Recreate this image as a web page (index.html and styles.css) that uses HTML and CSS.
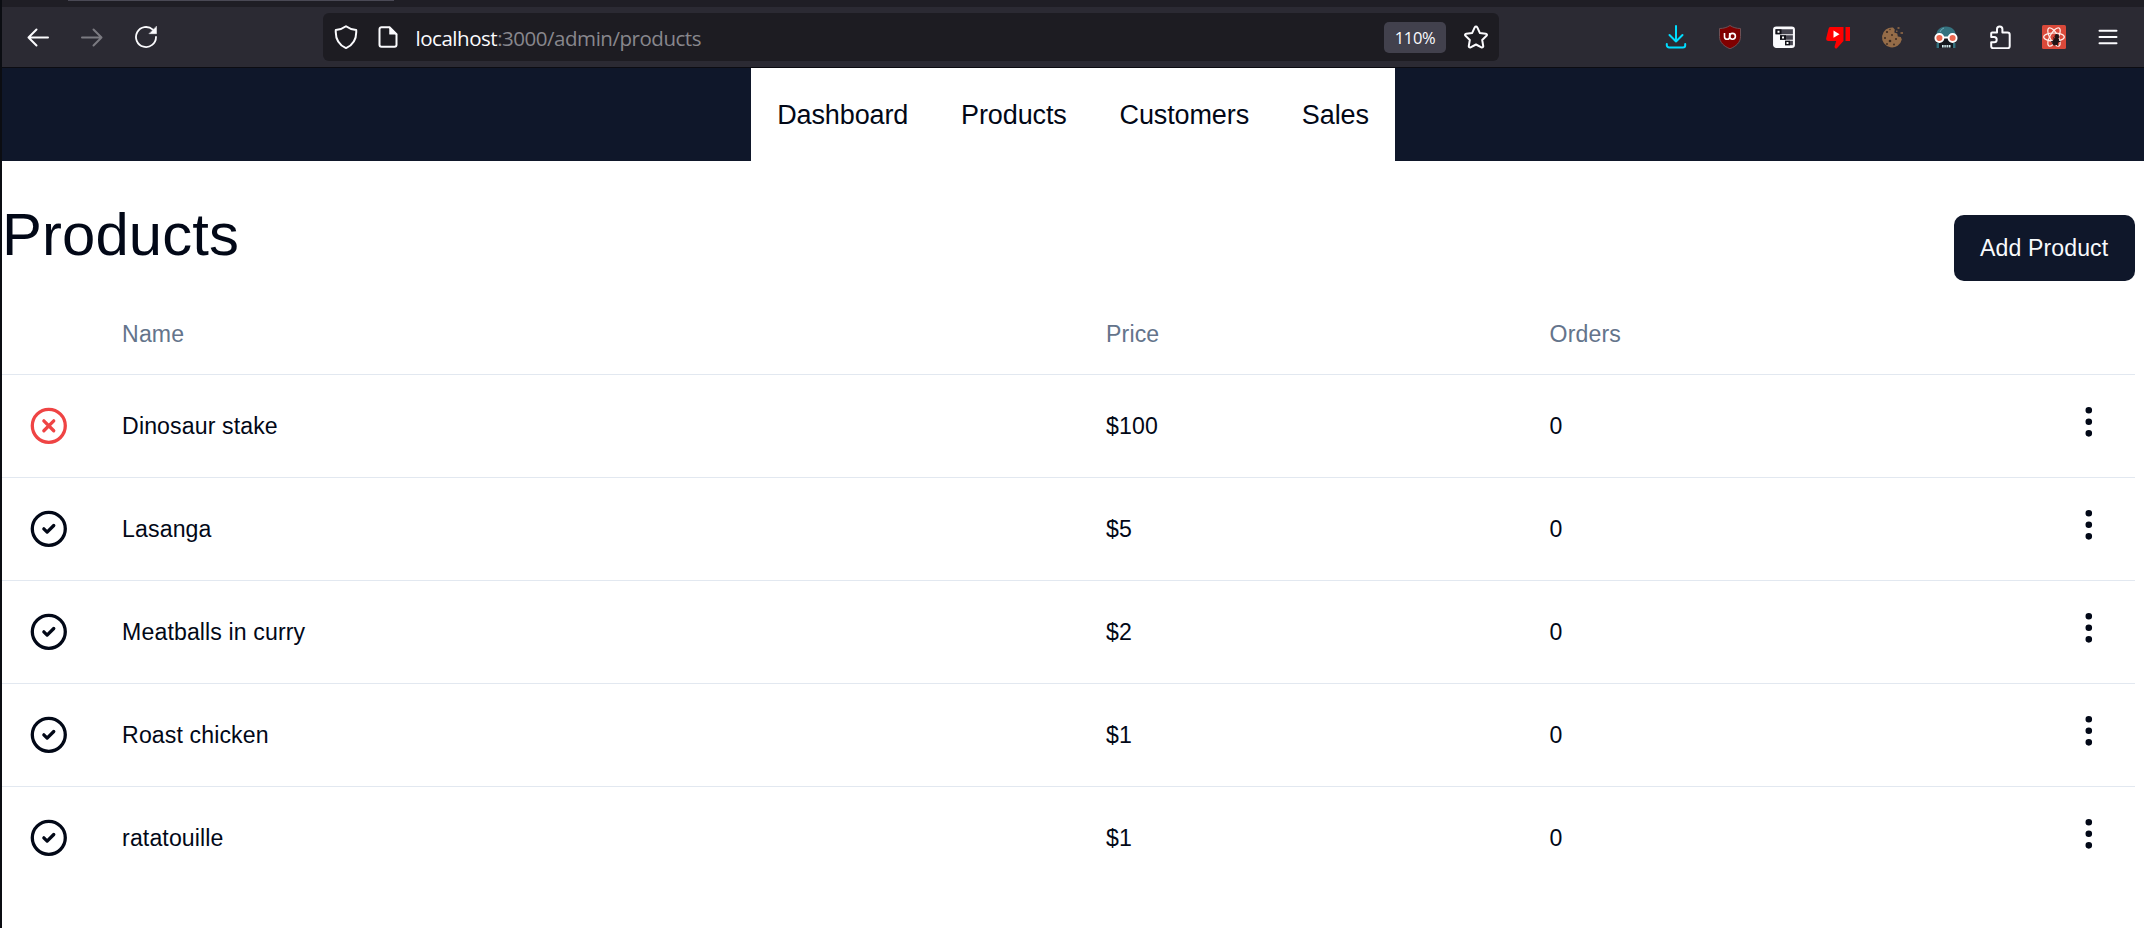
FILE: index.html
```html
<!DOCTYPE html>
<html lang="en">
<head>
<meta charset="utf-8">
<title>Products</title>
<link rel="stylesheet" href="styles.css">
</head>
<body>
<svg class="defs" width="0" height="0" aria-hidden="true">
  <symbol id="check" viewBox="0 0 24 24"><circle cx="12" cy="12" r="10"/><path d="m9 12 2 2 4-4"/></symbol>
  <symbol id="cross" viewBox="0 0 24 24"><circle cx="12" cy="12" r="10"/><path d="m15 9-6 6M9 9l6 6"/></symbol>
  <symbol id="more" viewBox="0 0 24 24"><circle cx="12" cy="5" r="1"/><circle cx="12" cy="12" r="1"/><circle cx="12" cy="19" r="1"/></symbol>
</svg>
<div class="window">
  <div class="tabstrip"><div class="tab-edge"></div></div>
  <div class="toolbar">
    <div class="nav-buttons">
      <svg class="ico" viewBox="0 0 24 24"><path d="M22 12.500H2.500M10.500 4.500l-8 8 8 8"/></svg>
      <svg class="ico dim" viewBox="0 0 24 24"><path d="M2 12.500h19.500M13.500 4.500l8 8-8 8"/></svg>
      <svg class="ico thin" viewBox="0 0 24 24"><path d="M22 12a10 10 0 1 1-3.200-7.300"/><path class="solid" d="M22.500 1.500v7.200h-7.200z"/></svg>
    </div>
    <div class="urlbar">
      <svg class="ico shield" viewBox="0 0 24 24"><path d="M12 1.300c3 2.300 6.400 3.400 10.200 3.800.5 7.500-2.200 14.400-10.200 18C4 19.500 1.300 12.600 1.800 5.100 5.600 4.700 9 3.600 12 1.300z"/></svg>
      <svg class="ico page-ico" viewBox="0 0 24 24"><path d="M5.500 2.200h8l7 7v10.600a2 2 0 0 1-2 2h-13a2 2 0 0 1-2-2V4.200a2 2 0 0 1 2-2z"/><path class="solid" d="M13.500 2.200v7h7z"/></svg>
      <div class="url"><span class="host">localhost</span>:3000/admin/products</div>
      <div class="zoom">110%</div>
      <svg class="ico star" viewBox="0 0 24 24"><path d="M12 1.500c.6 0 1 .4 1.300.9l2.500 5.500 6 .8c1.200.2 1.500 1.300.7 2.100l-4.300 4.200 1 6c.2 1.100-.8 1.800-1.800 1.300L12 19.500l-5.400 2.800c-1 .5-2-.2-1.800-1.300l1-6-4.300-4.200c-.8-.8-.5-1.900.7-2.100l6-.8 2.500-5.500c.3-.5.700-.9 1.300-.9z"/></svg>
    </div>
    <div class="extensions">
      <svg class="ico download" viewBox="0 0 24 24"><path d="M12 1v15.500M5.500 10l6.500 6.500 6.500-6.500M2.800 19v1.200a2.300 2.300 0 0 0 2.300 2.300h13.800a2.300 2.300 0 0 0 2.300-2.300V19"/></svg>
      <svg class="art" viewBox="0 0 24 24"><path d="M12 .5c3 2 6.500 3 10.500 3v8c0 6-4.500 9.800-10.500 12.300C6 21.300 1.500 17.500 1.500 11.500v-8c4 0 7.500-1 10.500-3z" fill="#800000" stroke="#6d5055"/><path d="M6.500 8v3.700a2.600 2.600 0 0 0 5.200 0V8" fill="none" stroke="#fff" stroke-width="1.600"/><circle cx="14.500" cy="11.300" r="2.900" fill="none" stroke="#fff" stroke-width="1.600"/></svg>
      <svg class="art" viewBox="0 0 24 24"><rect x="1.800" y="2.300" width="20.400" height="20" rx="2.500" fill="#fbfbfe" stroke="#fbfbfe" stroke-width="1.500"/><path d="M3.500 4.300h17.400v5H3.500zM8 10.200h12.900v4.600H8zM13 15.800h7.900v4.400H13z" fill="#45444f"/><path d="M3.500 4.300h6v5h-6zM8 10.200h6v4.600H8zM13 15.800h5v4.400h-5z" fill="#111118"/><path d="M5.500 5.800h2v2h-2zM10 11.500h2v2h-2zM14.500 17h2v2h-2z" fill="#fff"/></svg>
      <svg class="art" viewBox="0 0 24 24"><path d="M4.200 2h13.300v14l-6.800 7.500c-1.500.2-2.500-1-2-2.500l1.500-5H2.500C.8 16 0 15 .2 13.300L2.500 4c.3-1.300.8-2 1.700-2zM19.500 2h4.700v14h-4.700z" fill="#f00"/><path d="M7.500 5.500v7.200l6-3.500z" fill="#fff"/></svg>
      <svg class="art" viewBox="0 0 24 24"><path d="M13 2.500a10 10 0 1 0 8.800 12l-1-2.500-3-.5-.5-3-3-1 .5-3z" fill="#956c48"/><path d="M17.500 2h2v2h-2zM20.500 7H23v2h-2.500zM16 5.500h1.500V7H16z" fill="#7d5c42"/><g fill="#3b2a20"><circle cx="7" cy="7" r="1.100"/><circle cx="12" cy="10" r=".9"/><circle cx="5" cy="13" r="1"/><circle cx="10" cy="16" r="1.300"/><circle cx="16" cy="14" r="1"/><circle cx="14" cy="19.500" r=".9"/><circle cx="7" cy="19" r=".9"/><circle cx="10" cy="4.500" r=".7"/></g></svg>
      <svg class="art" viewBox="0 0 24 24"><path d="M2 12C2 5 6 1.500 12 1.500S22 5 22 12z" fill="#35727f"/><path d="M6 7q1-3 4-4" fill="none" stroke="#6eabb8"/><path d="M2.500 12h19v11h-19z" fill="#15181e"/><path d="M2.500 18H5v5H2.500zM19 18h2.500v5H19z" fill="#35727f"/><path d="M8 20h8.500v2.500H8z" fill="#d7eef1"/><path d="M10 20v3M12.200 20v3M14.400 20v3" stroke="#15181e" stroke-width=".7"/><path d="M9 12.500h6" stroke="#fff" stroke-width="2"/><g fill="#ed6850" stroke="#fff" stroke-width="1.900"><circle cx="5.400" cy="13" r="4"/><circle cx="18.600" cy="13" r="4"/></g></svg>
      <svg class="ico" viewBox="0 0 24 24"><path d="M4.200 7.500H9V4.200a2.700 2.700 0 0 1 5.400 0v3.300h5a2.300 2.300 0 0 1 2.300 2.300v11.400a2 2 0 0 1-2 2H5.200a2 2 0 0 1-2-2v-3.900h2.900a2.600 2.600 0 0 0 0-5.200H3.200V8.500a1 1 0 0 1 1-1z"/></svg>
      <svg class="art" viewBox="0 0 24 24"><rect width="24" height="24" rx="1.500" fill="#d9493a"/><g fill="none" stroke="#fff0ec" stroke-width="1.200"><ellipse cx="12" cy="12" rx="10.300" ry="4"/><ellipse cx="12" cy="12" rx="10.300" ry="4" transform="rotate(60 12 12)"/><ellipse cx="12" cy="12" rx="10.300" ry="4" transform="rotate(120 12 12)"/></g><g transform="rotate(30 14 15)" fill="#201416" stroke="#201416"><ellipse cx="14.500" cy="16.500" rx="2.500" ry="3.700"/><circle cx="13" cy="11.500" r="1.900"/><path d="M10.500 14l3 2M10.500 19l3-2M18.500 14l-3 2M18.500 19l-3-2"/></g></svg>
      <svg class="ico" viewBox="0 0 24 24"><path d="M3.500 5.700h17M3.500 12h17M3.500 18.300h17"/></svg>
    </div>
  </div>
  <nav class="site-nav">
    <a class="nav-link">Dashboard</a><a class="nav-link">Products</a><a class="nav-link">Customers</a><a class="nav-link">Sales</a>
  </nav>
  <main class="content">
    <header class="heading">
      <h1 class="title">Products</h1>
      <button class="add">Add Product</button>
    </header>
    <div class="table">
      <div class="row head"><span></span><span>Name</span><span>Price</span><span>Orders</span><span></span></div>
      <div class="row"><svg class="mark bad"><use href="#cross"/></svg><span>Dinosaur stake</span><span>$100</span><span>0</span><svg class="mark more"><use href="#more"/></svg></div>
      <div class="row"><svg class="mark"><use href="#check"/></svg><span>Lasanga</span><span>$5</span><span>0</span><svg class="mark more"><use href="#more"/></svg></div>
      <div class="row"><svg class="mark"><use href="#check"/></svg><span>Meatballs in curry</span><span>$2</span><span>0</span><svg class="mark more"><use href="#more"/></svg></div>
      <div class="row"><svg class="mark"><use href="#check"/></svg><span>Roast chicken</span><span>$1</span><span>0</span><svg class="mark more"><use href="#more"/></svg></div>
      <div class="row"><svg class="mark"><use href="#check"/></svg><span>ratatouille</span><span>$1</span><span>0</span><svg class="mark more"><use href="#more"/></svg></div>
    </div>
  </main>
</div>
</body>
</html>
```
FILE: styles.css
```css
* { box-sizing: border-box; }
body {
  margin: 0;
  background: #fff;
  color: #020817;
  font: 23.1px/33px "Liberation Sans", Arial, sans-serif;
  letter-spacing: .12px;
}
.defs { display: block; }
.window {
  height: 928px;
  overflow: hidden;
  border-left: 2px solid #0b0d12;
}

/* Browser chrome */
.tabstrip { height: 7px; background: #1f1e25; padding-left: 66px; }
.tab-edge { width: 326px; height: 1px; background: #4a4955; }
.toolbar {
  display: flex;
  align-items: center;
  height: 61px;
  background: #2b2a33;
  border-bottom: 1px solid #0c0c12;
}
.nav-buttons { display: flex; gap: 30px; width: 321px; padding-left: 24px; }
.ico {
  width: 24px;
  height: 24px;
  flex: none;
  fill: none;
  stroke: #fbfbfe;
  stroke-width: 2;
  stroke-linecap: round;
  stroke-linejoin: round;
}
.art { width: 24px; height: 24px; flex: none; }
.dim { stroke: #7b7a81; }
.thin { stroke-width: 1.8; }
.solid { fill: #fbfbfe; stroke-width: .5; }
.urlbar {
  display: flex;
  align-items: center;
  width: 1176px;
  height: 48px;
  padding-left: 11px;
  border-radius: 6px;
  background: #1d1c22;
}
.page-ico { margin-left: 18px; }
.url {
  flex: 1;
  margin-left: 15.5px;
  padding-top: 2px;
  color: #88878d;
  font: 20.5px/28px "Open Sans", "Noto Sans", sans-serif;
  letter-spacing: -.47px;
  white-space: nowrap;
}
.host { color: #fbfbfe; }
.zoom {
  width: 62px;
  height: 31px;
  border-radius: 5px;
  background: #42414d;
  color: #fbfbfe;
  font: 16.5px/32px "Open Sans", "Noto Sans", sans-serif;
  letter-spacing: -.3px;
  text-align: center;
}
.star { margin: 0 11px 0 18px; }
.extensions { display: flex; gap: 30.1px; margin-left: 164.7px; }
.download { stroke: #00ddff; }

/* Site navigation */
.site-nav {
  display: flex;
  justify-content: center;
  height: 93px;
  background: #0f172a;
}
.nav-link {
  padding: 27.5px 26.4px 26px;
  background: #fff;
  font-size: 27px;
  letter-spacing: -.11px;
  line-height: 39.6px;
}

/* Products page */
.content { padding-right: 9.3px; }
.heading {
  display: flex;
  justify-content: space-between;
  height: 134px;
  padding-top: 41px;
}
.title {
  margin: 0;
  font-size: 59.8px;
  line-height: 66px;
  font-weight: 400;
}
.add {
  height: 66px;
  margin-top: 13px;
  padding: 0 26.4px;
  border: 0;
  border-radius: 9.9px;
  background: #0f172a;
  color: #f8fafc;
  font: inherit;
  letter-spacing: inherit;
}
.row {
  display: grid;
  grid-template-columns: 120.1px 984px 443.5px 1fr 92.4px;
  align-items: center;
  height: 103px;
  border-bottom: 1px solid #e2e8f0;
}
.row:last-child { border-bottom-color: transparent; }
.head { height: 80px; color: #64748b; }
.mark {
  width: 39.6px;
  height: 39.6px;
  margin-left: 27.2px;
  fill: none;
  stroke: #020817;
  stroke-width: 2;
  stroke-linecap: round;
  stroke-linejoin: round;
}
.bad { stroke: #ef4444; }
.more { margin: 0 0 8px 26.4px; }
```
